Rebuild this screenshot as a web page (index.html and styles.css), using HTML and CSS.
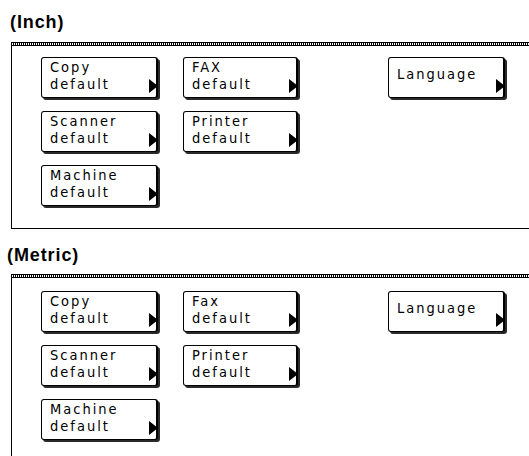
FILE: index.html
```html
<!DOCTYPE html>
<html>
<head>
<meta charset="utf-8">
<link rel="stylesheet" href="styles.css">
</head>
<body>
<div class="sheet">
  <section class="group">
    <h2 class="group-title group-title--inch">(Inch)</h2>
    <div class="panel">
      <div class="panel-rule"></div>
      <div class="panel-body">
        <div class="key-grid">
          <div class="key"><span class="key-label">Copy<br>default</span><i class="key-arrow"></i></div>
          <div class="key"><span class="key-label">FAX<br>default</span><i class="key-arrow"></i></div>
          <div class="key key--single"><span class="key-label">Language</span><i class="key-arrow"></i></div>
          <div class="key key--first"><span class="key-label">Scanner<br>default</span><i class="key-arrow"></i></div>
          <div class="key"><span class="key-label">Printer<br>default</span><i class="key-arrow"></i></div>
          <div class="key key--first"><span class="key-label">Machine<br>default</span><i class="key-arrow"></i></div>
        </div>
      </div>
    </div>
  </section>
  <section class="group group--metric">
    <h2 class="group-title group-title--metric">(Metric)</h2>
    <div class="panel">
      <div class="panel-rule"></div>
      <div class="panel-body panel-body--metric">
        <div class="key-grid">
          <div class="key"><span class="key-label">Copy<br>default</span><i class="key-arrow"></i></div>
          <div class="key"><span class="key-label">Fax<br>default</span><i class="key-arrow"></i></div>
          <div class="key key--single"><span class="key-label">Language</span><i class="key-arrow"></i></div>
          <div class="key key--first"><span class="key-label">Scanner<br>default</span><i class="key-arrow"></i></div>
          <div class="key"><span class="key-label">Printer<br>default</span><i class="key-arrow"></i></div>
          <div class="key key--first"><span class="key-label">Machine<br>default</span><i class="key-arrow"></i></div>
        </div>
      </div>
    </div>
  </section>
</div>
</body>
</html>
```

FILE: styles.css
```css
html, body {
  margin: 0;
  padding: 0;
  background: #fff;
  color: #000;
}

.sheet {
  width: 529px;
  overflow: hidden;
}

.group-title {
  margin: 11px 0 9px 0;
  font-family: "Liberation Sans", Arial, sans-serif;
  font-weight: bold;
  font-size: 18px;
  line-height: 22px;
  letter-spacing: 0.9px;
}

.group-title--inch {
  padding-left: 10px;
}

.group--metric .group-title {
  margin-top: 15px;
  margin-bottom: 8px;
}

.group-title--metric {
  padding-left: 7px;
}

.panel {
  margin-left: 11px;
  border-bottom: 1px solid #000;
}

.panel-rule {
  height: 2px;
  border-top: 1px solid #000;
  border-bottom: 1px solid #000;
  background: repeating-linear-gradient(90deg, #000 0 1px, #fff 1px 2px);
}

.panel-body {
  border-left: 1px solid #000;
  padding: 11px 0 22px 29px;
}

.panel-body--metric {
  padding-top: 13px;
}

.key-grid {
  display: grid;
  grid-template-columns: 142px 205px 119px;
  grid-auto-rows: 41px;
  row-gap: 13px;
}

.key {
  position: relative;
  box-sizing: border-box;
  width: 117px;
  height: 41px;
  border: 1px solid #000;
  border-right-width: 2px;
  border-radius: 3px;
  box-shadow: 2px 2px 0 #2a2a2a;
  background: #fff;
  padding: 1px 0 0 8px;
  font-family: "DejaVu Sans Condensed", "DejaVu Sans", sans-serif;
  font-stretch: condensed;
  font-size: 14.5px;
  line-height: 17px;
  letter-spacing: 2px;
}

.key-grid .key:nth-child(2),
.key-grid .key:nth-child(5) {
  width: 115px;
}

.key--single {
  padding-top: 8px;
}

.key--first {
  grid-column: 1;
}

.key-arrow {
  position: absolute;
  right: -2px;
  bottom: 4px;
  width: 0;
  height: 0;
  border-left: 9px solid #000;
  border-top: 7px solid transparent;
  border-bottom: 7px solid transparent;
}
```
